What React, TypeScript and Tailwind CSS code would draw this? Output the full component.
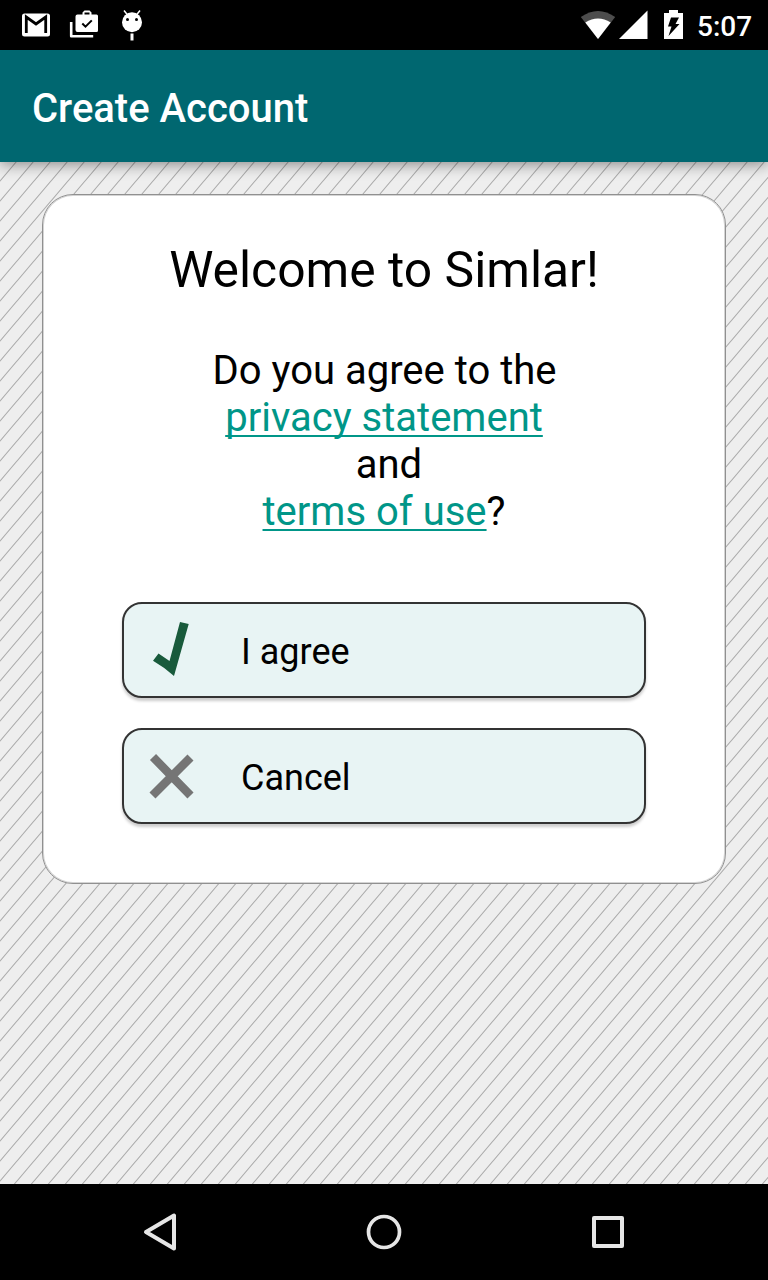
import React from "react";

function StatusBar() {
  return (
    <header className="flex h-[50px] shrink-0 items-center justify-between bg-black text-white">
      <svg width="160" height="50" viewBox="0 0 160 50" fill="#fff">
        <rect x="22" y="13.5" width="28" height="23" rx="2.5" />
        <path d="M26.3 33V17L36 24L45.7 17V33" fill="none" stroke="#000" strokeWidth="2.8" />
        <path d="M71.2 22v14.3h22" fill="none" stroke="#fff" strokeWidth="2.6" strokeLinejoin="round" />
        <path d="M77.5 14.5h5v-2l2-2h5l2 2v2h5q1.5 0 1.5 1.5v14.5q0 1.5-1.5 1.5h-19q-2 0-2-2V16.5q0-2 2-2Zm7 0h5v-2h-5Z" fillRule="evenodd" />
        <path d="M82.3 23.5l3.2 3.2l6.3-6.3" fill="none" stroke="#000" strokeWidth="2" />
        <circle cx="132" cy="22.3" r="10" />
        <path d="M124 10.5l4 5M140 10.5l-4 5" stroke="#fff" strokeWidth="1.5" />
        <path d="M132 33.5v7" stroke="#fff" strokeWidth="3" />
        <circle cx="127.5" cy="19.5" r="1.5" fill="#000" />
        <circle cx="136.5" cy="19.5" r="1.5" fill="#000" />
      </svg>
      <div className="flex items-center">
        <svg width="118" height="50" viewBox="579 0 118 50" fill="#fff">
          <path d="M598 39L580.8 17Q598 5 615.2 17Z" fill="#4d4d4d" />
          <path d="M598 39L585.3 22.5Q598 14.5 610.7 22.5Z" />
          <path d="M619 39H647.5V10.5Z" />
          <path d="M664 13h5v-3h9v3h5v26h-19Z" />
          <path d="M671 17.5h8l-3.5 6.5h4l-11 12l3-9.500h-3.5Z" fill="#000" />
        </svg>
        <span className="w-[71px] pt-1 text-[28px] leading-none font-medium">5:07</span>
      </div>
    </header>
  );
}

function StripedBackground() {
  return (
    <svg className="absolute inset-0" width="100%" height="100%" aria-hidden="true">
      <defs>
        <pattern id="stripes" width="17" height="20" patternUnits="userSpaceOnUse" y="-1">
          <path d="M-17 40L34 -20M-17 20L17 -20M0 40L34 0" stroke="#acacac" strokeWidth="1.1" />
        </pattern>
      </defs>
      <rect width="100%" height="100%" fill="#eee" />
      <rect width="100%" height="100%" fill="url(#stripes)" />
    </svg>
  );
}

function ActionButton({ icon, label }: { icon: React.ReactNode; label: string }) {
  return (
    <button className="flex h-24 w-full items-center rounded-[20px] border-2 border-[#333] bg-[#e8f4f4] text-left text-[36px] leading-none shadow-[0_3px_3px_rgba(0,0,0,0.2)]">
      <span className="w-[117px] shrink-0">{icon}</span>
      <span className="pt-[3px]">{label}</span>
    </button>
  );
}

export default function App() {
  return (
    <div className="flex h-[1280px] w-[768px] flex-col overflow-hidden font-['Roboto',sans-serif] text-black">
      <StatusBar />
      <div className="z-10 flex h-28 shrink-0 items-center bg-[#006770] px-8 pt-1.5 text-[40px] leading-none font-medium text-white shadow-[0_2px_14px_rgba(0,0,0,0.45)]">
        <h1>Create Account</h1>
      </div>
      <main className="relative flex-1 px-[42px] pt-8">
        <StripedBackground />
        <section className="relative flex h-[690px] flex-col rounded-[31px] border border-[#909090] bg-white px-[79px] pt-[46px] text-center shadow-[inset_0_0_0_1px_#d4d4d4]">
          <h2 className="text-[49.8px] leading-[59px]">Welcome to Simlar!</h2>
          <p className="mt-[47px] text-[40px] leading-[47px]">
            <span className="pl-px">Do you agree to the</span>
            <br />
            <a className="text-[#009688] underline decoration-2 underline-offset-[4px] [text-decoration-skip-ink:none]">privacy statement</a>
            <br />
            {"\u00a0and"}
            <br />
            <a className="text-[#009688] underline decoration-2 underline-offset-[4px] [text-decoration-skip-ink:none]">terms of use</a>?
          </p>
          <div className="mt-[67px] flex flex-col gap-[30px]">
            <ActionButton
              label="I agree"
              icon={
                <svg width="96" height="92" viewBox="124 604 96 92">
                  <path d="M180 622L188.7 624L174 676Q164 667 153 660.7L158.5 653.5L169.5 661Z" fill="#185a3b" />
                </svg>
              }
            />
            <ActionButton
              label="Cancel"
              icon={
                <svg width="96" height="92" viewBox="124 730 96 92">
                  <path d="M153 757L190.5 795.5M190.5 757.5L152.5 795.5" stroke="#757575" strokeWidth="8.5" />
                </svg>
              }
            />
          </div>
        </section>
      </main>
      <nav className="flex h-24 shrink-0 items-center justify-center gap-[128px] bg-black">
        <svg width="96" height="96" viewBox="112 1184 96 96" fill="none" stroke="#e6e6e6" strokeWidth="4" strokeLinejoin="round">
          <path d="M146 1232L174 1215.5V1248.5Z" />
        </svg>
        <svg width="96" height="96" viewBox="336 1184 96 96" fill="none" stroke="#e6e6e6" strokeWidth="3.7">
          <circle cx="384" cy="1232" r="15.5" />
        </svg>
        <svg width="96" height="96" viewBox="560 1184 96 96" fill="none" stroke="#e6e6e6" strokeWidth="4" strokeLinejoin="round">
          <rect x="594" y="1218" width="28" height="28" />
        </svg>
      </nav>
    </div>
  );
}
